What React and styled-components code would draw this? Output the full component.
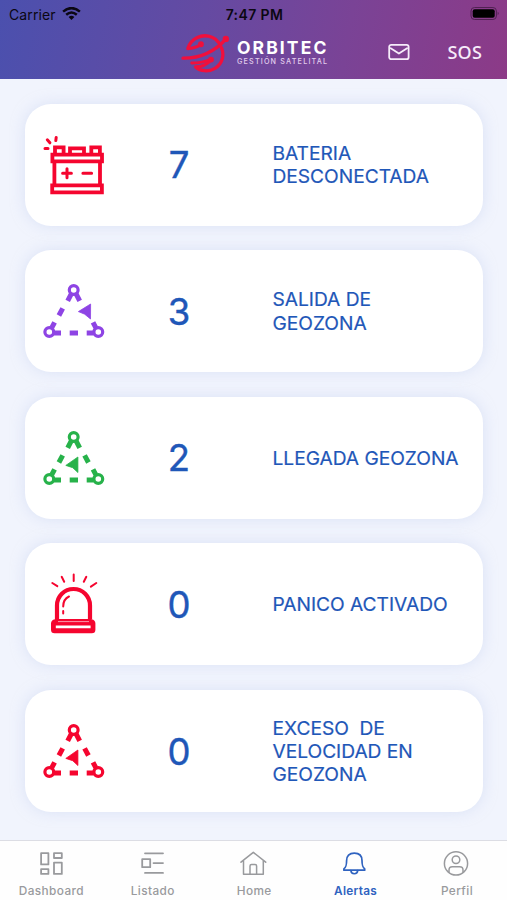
import React from "react";
import styled, { createGlobalStyle } from "styled-components";

const GlobalStyle = createGlobalStyle`
  *, *::before, *::after { box-sizing: border-box; }
  body { margin: 0; background: #f1f4fd; }
`;

const Screen = styled.div`
  width: 507px;
  height: 900px;
  display: flex;
  flex-direction: column;
  overflow: hidden;
  background: #f1f4fd;
  color: #1f57b8;
  font-family: Inter, "Liberation Sans", sans-serif;
`;

const Header = styled.header`
  flex: none;
  height: 79px;
  background: linear-gradient(100deg, #4b50ae 0%, #654aa2 40%, #7a4396 68%, #8c3a87 100%);
`;

const StatusBar = styled.div`
  height: 28px;
  display: grid;
  grid-template-columns: 1fr auto 1fr;
  align-items: center;
  padding: 0 7px 0 9px;
  color: #0b0712;
  font-size: 14px;
`;

const Carrier = styled.span`
  display: flex;
  align-items: center;
  gap: 6px;
  letter-spacing: 0.1px;
`;

const Clock = styled.span`
  font-weight: 600;
  font-size: 14px;
  letter-spacing: 0.4px;
`;

const BatteryLevel = styled.svg`
  justify-self: end;
`;

const NavBar = styled.div`
  height: 49px;
  display: flex;
  align-items: center;
  padding: 0 25px 0 181px;
  color: #f6ecfa;
`;

const Brand = styled.div`
  display: flex;
  align-items: center;
  gap: 7px;
  width: 207px;
`;

const BrandText = styled.div`
  display: flex;
  flex-direction: column;
  width: 93px;
  padding-top: 1px;
  white-space: nowrap;
`;

const BrandName = styled.span`
  font-size: 17.5px;
  line-height: 16px;
  font-weight: 700;
  letter-spacing: 2.1px;
  color: #fff;
`;

const BrandTagline = styled.span`
  font-size: 7.2px;
  line-height: 11px;
  font-weight: 500;
  letter-spacing: 1.18px;
  color: #e2cdec;
`;

const Sos = styled.span`
  margin-left: auto;
  padding-bottom: 2px;
  font: 500 18px/20px "Noto Sans", sans-serif;
  letter-spacing: 0.2px;
`;

const AlertList = styled.main`
  flex: 1;
  display: flex;
  flex-direction: column;
  gap: 24.6px;
  padding: 24.5px 24.5px 0 25px;
`;

const AlertCard = styled.article`
  flex: none;
  height: 122px;
  display: grid;
  grid-template-columns: 68px 142px 1fr;
  align-items: center;
  padding-left: 15px;
  border-radius: 26px;
  background: #fff;
  box-shadow: 0 0 14px rgba(196, 208, 240, 0.5);
`;

const AlertIcon = styled.svg`
  width: 68px;
  height: 68px;
  color: ${(p) => p.$color};
`;

const Count = styled.span`
  padding-top: 1.5px;
  text-align: center;
  font-size: 36.5px;
  line-height: 40px;
  -webkit-text-stroke: 0.4px currentColor;
`;

const Label = styled.span`
  padding: 1.5px 0 0 22.5px;
  font-size: 19.2px;
  line-height: 23.4px;
  letter-spacing: -0.03px;
  white-space: pre;
  -webkit-text-stroke: 0.2px currentColor;
`;

const TabBar = styled.nav`
  flex: none;
  height: 60px;
  display: grid;
  grid-template-columns: repeat(5, 1fr);
  padding: 9px 0 0;
  border-top: 1px solid #dcdde4;
  background: #fefefe;
`;

const Tab = styled.div`
  display: flex;
  flex-direction: column;
  align-items: center;
  gap: 6px;
  color: ${(p) => (p.$active ? "#2f63c0" : "#999a9d")};
  font-size: 11.8px;
  line-height: 14px;
  font-weight: ${(p) => (p.$active ? 600 : 500)};
  letter-spacing: ${(p) => (p.$active ? 0.3 : 0.42)}px;
`;

const TabName = styled.span`
  padding-left: 1.4px;
`;

const TabIcon = styled.svg`
  width: 28px;
  height: 28px;
  fill: none;
  stroke: currentColor;
  stroke-width: 1.5;
  stroke-linejoin: round;
  stroke-linecap: round;
`;

function BatteryIcon() {
  return (
    <g fill="none" stroke="currentColor" strokeWidth="3.8">
      <path d="M15 23v-6.7h8.6V23M30 23v-5.7h14V23M51.3 23v-6.7h8.6V23" />
      <path d="M12.4 23.6h49.6v6.7H12.4zM14.4 30.5v23M60 30.5v23M12.2 54.3h49.7v7.1H12.2z" />
      <g strokeWidth="3" strokeLinecap="round">
        <path d="M27 37.7v9M22.6 42.2h8.8M42.9 42.2h8.7" />
        <path d="M5 17.5h3M7.3 8.8l2.6 3M16.2 6.4l-.4 3.2" />
      </g>
    </g>
  );
}

function GeoIcon({ outside }) {
  return (
    <g fill="none" stroke="currentColor">
      <g strokeWidth="3.2">
        <circle cx="33.7" cy="13" r="4.4" />
        <circle cx="9.3" cy="55" r="4.4" />
        <circle cx="58.3" cy="55" r="4.4" />
      </g>
      <path
        strokeWidth="5"
        d="M13.7 56H21M29.7 56H38M46.7 56h7M31.3 16.8l-3.6 7M36.1 16.8l3.6 7M22.7 31.3l-3.8 7.2M14.6 45.4l-2.8 5.3M53 45.4l2.8 5.3"
      />
      {!outside && <path strokeWidth="5" d="M44.6 31.3l3.8 7.2" />}
      <path
        fill="currentColor"
        strokeWidth=".8"
        strokeLinejoin="round"
        d={outside ? "M50.6 27L38.4 34.6l6.3 2.6 5.8 4.8z" : "M37.9 33L25.8 41.4l6.9 2.3 5.2 4.8z"}
      />
    </g>
  );
}

function SirenIcon() {
  return (
    <g fill="none" stroke="currentColor">
      <path strokeWidth="4.2" d="M17 49V35.5a16.5 16.5 0 0 1 33 0V49" />
      <path strokeWidth="2" strokeLinecap="round" d="M23.2 36.5c0-5 2-8.3 5.8-10M23.2 41v2.6" />
      <path
        fill="currentColor"
        fillRule="evenodd"
        stroke="none"
        d="M15 49h36.6v.2q3.8.7 3.8 4.3v6.2q0 3.5-3.6 3.5H14.6q-3.6 0-3.6-3.5v-6.2q0-3.6 4-4.3zM15.8 55.6v2.7h34.8v-2.7z"
      />
      <path stroke="#fff" strokeWidth=".9" opacity=".65" d="M18 51.6h31" />
      <path
        strokeWidth="2"
        strokeLinecap="round"
        d="M12.3 13l5 3.2M21.7 6.8l2.5 5M33.7 4.4v6.7M46.3 6.8l-2.5 5M56.3 13l-5.4 3.6"
      />
    </g>
  );
}

const alerts = [
  { count: 7, label: "BATERIA\nDESCONECTADA", color: "#f5052f", icon: <BatteryIcon /> },
  { count: 3, label: "SALIDA DE\nGEOZONA", color: "#8e44e4", icon: <GeoIcon outside /> },
  { count: 2, label: "LLEGADA GEOZONA", color: "#27b24a", icon: <GeoIcon /> },
  { count: 0, label: "PANICO ACTIVADO", color: "#f5052f", icon: <SirenIcon /> },
  { count: 0, label: "EXCESO  DE\nVELOCIDAD EN\nGEOZONA", color: "#f5052f", icon: <GeoIcon /> },
];

const tabs = [
  {
    name: "Dashboard",
    icon: <path strokeWidth="1.8" d="M4.1 3.2h7.3v11.2H4.1zM4.1 19.1h7.3v4.8H4.1zM17 3.2h7.8v4.8H17zM17 12.6h7.8v11.3H17z" />,
  },
  {
    name: "Listado",
    icon: <path strokeWidth="1.8" d="M7 3.3h18M15.5 13.1H25M7 22.9h18M4.2 9.2h8v8h-8z" />,
  },
  {
    name: "Home",
    icon: (
      <>
        <path d="M2 12.2L14.3 2.3l12.4 9.9M4.5 10.4v13.9h19.8V10.4" />
        <path d="M11 24v-8q0-1.6 1.5-1.6h3.6q1.5 0 1.5 1.6v8" />
      </>
    ),
  },
  {
    name: "Alertas",
    active: true,
    icon: (
      <>
        <path strokeWidth="1.7" d="M2.9 20.2v-1.3c2.1-1.8 2.7-3 2.7-8.3 0-4.5 2.6-7.5 7.7-7.5s7.7 3 7.7 7.5c0 5.3.6 6.5 2.7 8.3v1.3z" />
        <path strokeWidth="1.7" d="M9.9 20.5c.2 4.3 6.6 4.3 6.8 0" />
      </>
    ),
  },
  {
    name: "Perfil",
    icon: (
      <>
        <circle cx="14" cy="13.4" r="11.6" />
        <circle cx="14" cy="9.8" r="3.8" />
        <path d="M7 22.3v-2.4q0-3.2 3.3-3.2h7.4q3.3 0 3.3 3.2v2.4" />
      </>
    ),
  },
];

export default function App() {
  return (
    <Screen>
      <GlobalStyle />
      <Header>
        <StatusBar>
          <Carrier>
            Carrier
            <svg width="19" height="14" viewBox="0 0 19 14" fill="none" stroke="currentColor" strokeWidth="2.5">
              <path d="M1.1 4.6q8.4-7 16.8 0M4.2 7.8q5.3-4.6 10.6 0" />
              <path fill="currentColor" stroke="none" d="M6.6 9.9q2.9-2.4 5.8 0L9.5 13z" />
            </svg>
          </Carrier>
          <Clock>7:47 PM</Clock>
          <BatteryLevel width="30" height="14" viewBox="0 0 30 14">
            <rect x="1" y=".5" width="25.4" height="12" rx="3.5" fill="none" stroke="#512153" strokeWidth="1" />
            <rect x="2.7" y="2.2" width="22" height="8.6" rx="2" fill="#000" />
            <path d="M27.7 4.8q2 1.7 0 3.4z" fill="#512153" />
          </BatteryLevel>
        </StatusBar>
        <NavBar>
          <Brand>
            <svg width="49" height="40" viewBox="0 0 49 40" fill="none" stroke="#f10f3c" strokeWidth="3.3" strokeLinecap="round" strokeLinejoin="round">
              <path d="M19.7 11.5C16 14 11.5 15.6 6.8 15.6 10 5.2 21 .2 31 4.2 33.8 5.2 35.5 6.6 37.6 9.4" />
              <path d="M2 25.2C17 25.4 32 20.4 44.5 6.4" />
              <path d="M39.2 12.3C44.3 20.5 41.8 30.5 34 35.3 27.3 39.3 19.5 38.2 14.6 33.9 20 33.8 26 31.6 30 27" />
              <path strokeWidth="2.8" d="M10.7 30C17 30 24 28.8 30 26.2" />
              <circle cx="44.8" cy="5.9" r="2.3" fill="#f10f3c" strokeWidth="1.8" />
              <circle cx="19.9" cy="11.2" r="1.3" fill="#f10f3c" />
              <circle cx="30" cy="26.6" r="1.3" fill="#f10f3c" />
            </svg>
            <BrandText>
              <BrandName>ORBITEC</BrandName>
              <BrandTagline>GESTIÓN SATELITAL</BrandTagline>
            </BrandText>
          </Brand>
          <svg width="22" height="20" viewBox="0 0 22 20" fill="none" stroke="currentColor" strokeWidth="1.8" strokeLinejoin="round" strokeLinecap="round">
            <rect x="1.2" y="1.8" width="19.4" height="14.4" rx="2" />
            <path d="M2.7 5.2l8.2 5.3 8.2-5.3" />
          </svg>
          <Sos>SOS</Sos>
        </NavBar>
      </Header>
      <AlertList>
        {alerts.map((a) => (
          <AlertCard key={a.label}>
            <AlertIcon viewBox="0 0 68 68" $color={a.color}>{a.icon}</AlertIcon>
            <Count>{a.count}</Count>
            <Label>{a.label}</Label>
          </AlertCard>
        ))}
      </AlertList>
      <TabBar>
        {tabs.map((t) => (
          <Tab key={t.name} $active={t.active}>
            <TabIcon viewBox="0 0 28 28">{t.icon}</TabIcon>
            <TabName>{t.name}</TabName>
          </Tab>
        ))}
      </TabBar>
    </Screen>
  );
}
